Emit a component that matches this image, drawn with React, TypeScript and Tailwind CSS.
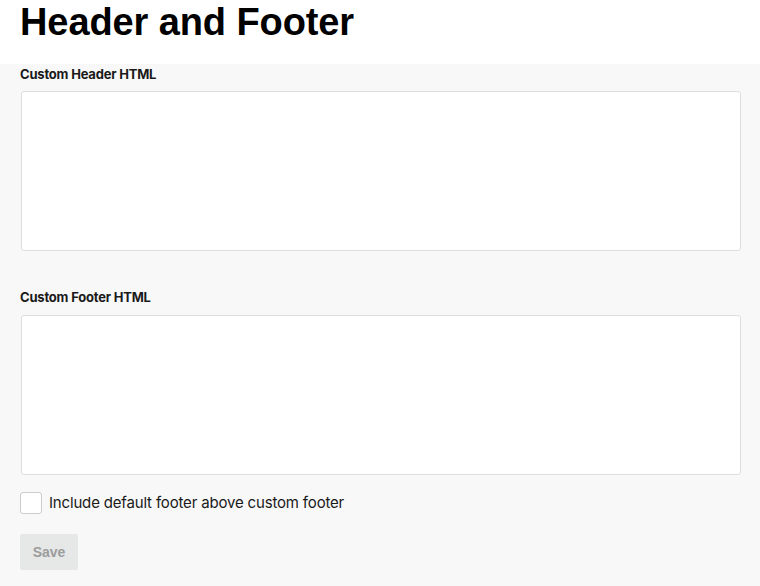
export default function App() {
  return (
    <div className="min-h-[586px] w-[760px] bg-white font-['Inter',sans-serif] text-black">
      <div className="h-16 px-5">
        <h1 className="font-['Liberation_Sans',sans-serif] text-[38px] font-bold leading-[44px] tracking-[-0.1px]">
          Header and Footer
        </h1>
      </div>

      <div className="min-h-[522px] bg-[#f8f8f8] px-5 pt-[2px]">
        <label className="block text-[13px] font-bold leading-4 tracking-[-0.2px] text-[#1a1a1a]">
          Custom Header HTML
        </label>
        <textarea className="ml-px mt-[9px] block h-[160px] w-[720px] resize-none rounded-[3px] border border-[#dedede] bg-white outline-none" />

        <label className="mt-[38px] block text-[13px] font-bold leading-4 tracking-[-0.2px] text-[#1a1a1a]">
          Custom Footer HTML
        </label>
        <textarea className="ml-px mt-[10px] block h-[160px] w-[720px] resize-none rounded-[3px] border border-[#dedede] bg-white outline-none" />

        <label className="mt-[17px] flex items-center gap-[7px]">
          <span className="block h-[22px] w-[22px] rounded-[3px] border border-[#cccccc] bg-white" />
          <span className="text-[15px] leading-5 tracking-[-0.17px] text-[#1a1a1a]">Include default footer above custom footer</span>
        </label>

        <button className="mt-[20px] h-[36px] w-[58px] rounded-[2px] bg-[#e6e7e7] font-['Liberation_Sans',sans-serif] text-[14px] font-bold text-[#9c9c9c]">
          Save
        </button>
      </div>
    </div>
  );
}
